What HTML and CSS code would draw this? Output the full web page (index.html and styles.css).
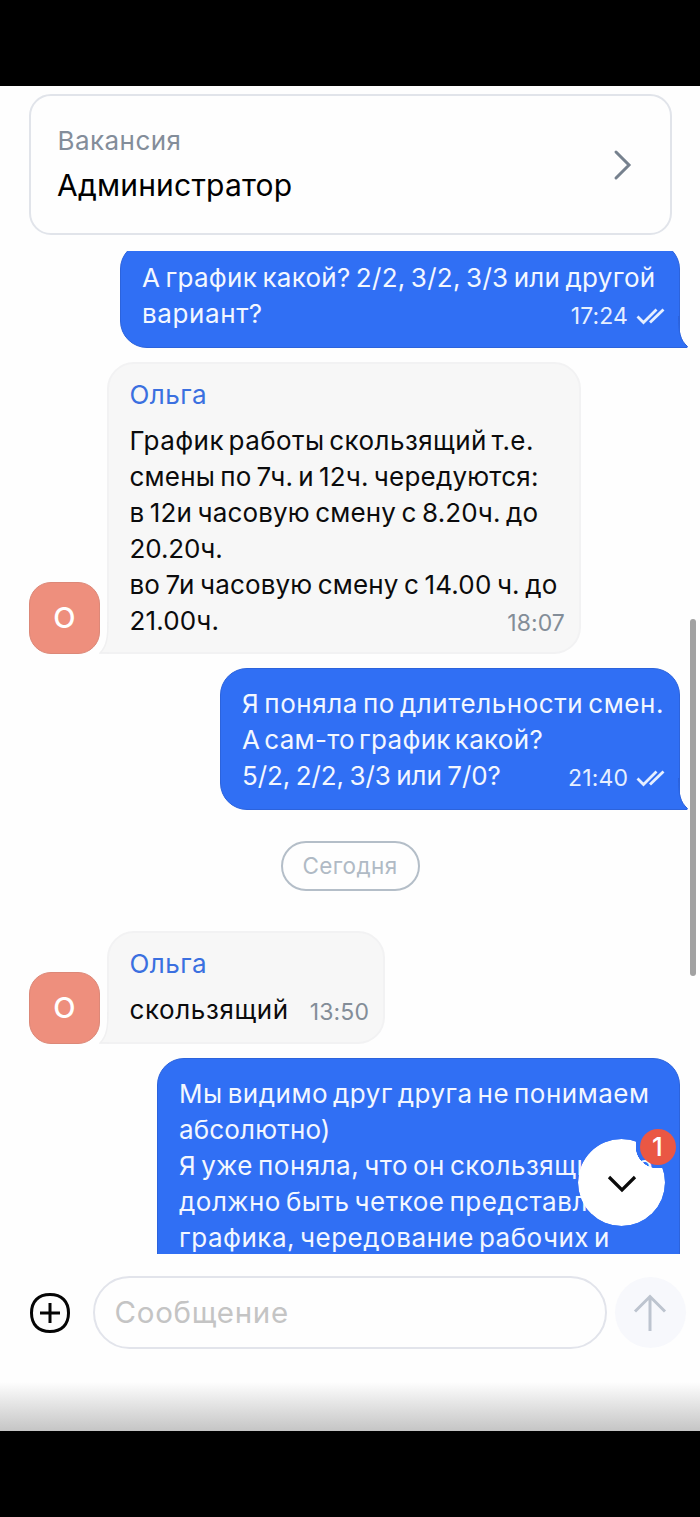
FILE: index.html
```html
<!DOCTYPE html>
<html lang="ru">
<head>
<meta charset="utf-8">
<title>Чат</title>
<link rel="stylesheet" href="styles.css">
</head>
<body>
<div class="bar bar-top"></div>
<main class="screen">
  <header class="vacancy">
    <div class="vacancy-text">
      <div class="vacancy-label">Вакансия</div>
      <div class="vacancy-title">Администратор</div>
    </div>
    <svg class="chevron" viewBox="0 0 20 32"><path d="M3 3l13 13L3 29"/></svg>
  </header>

  <section class="chat">
    <article class="row row-out row-first">
      <div class="bubble out tail">
        <div class="line normal"><span>А график какой? 2/2, 3/2, 3/3 или другой</span></div>
        <div class="line wider"><span>вариант?</span><span class="meta"><span>17:24</span><svg class="checks" viewBox="0 0 30 18"><path d="M1.500 9.500l6 6L20.500 2.500M14 15.500L27.500 2.500"/></svg></span></div>
        <svg class="tail-out" viewBox="-1 0 10 32"><path class="tail-fill" d="M-1 0H0C0 16 1 24 8.500 30.500Q8.500 32 7 32H-1Z"/><path class="tail-edge" d="M-.5 0C-.5 16 1 24 8.500 30.500Q8.500 31.500 7 31.500H-1"/></svg>
      </div>
    </article>

    <article class="row row-in">
      <div class="avatar">О</div>
      <div class="bubble in wide">
        <div class="line name"><span>Ольга</span></div>
        <div class="line wide-text first"><span>График работы скользящий т.е.</span></div>
        <div class="line normal mixed"><span>смены по 7ч. и 12ч. чередуются:</span></div>
        <div class="line tight"><span>в 12и часовую смену с 8.20ч. до</span></div>
        <div class="line tight digits"><span>20.20ч.</span></div>
        <div class="line tight"><span>во 7и часовую смену с 14.00 ч. до</span></div>
        <div class="line tight"><span>21.00ч.</span><span class="meta"><span>18:07</span></span></div>
        <svg class="tail-in" viewBox="0 0 10 32"><path class="tail-fill" d="M9 0C9 16 8 24 1 31.500H10V0Z"/><path class="tail-edge" d="M9 0C9 16 7.500 25 1 31H10"/></svg>
      </div>
    </article>

    <article class="row row-out">
      <div class="bubble out tail mid">
        <div class="line wide-text"><span>Я поняла по длительности смен.</span></div>
        <div class="line normal compact"><span>А сам-то график какой?</span></div>
        <div class="line digits"><span>5/2, 2/2, 3/3 или 7/0?</span><span class="meta"><span>21:40</span><svg class="checks" viewBox="0 0 30 18"><path d="M1.500 9.500l6 6L20.500 2.500M14 15.500L27.500 2.500"/></svg></span></div>
        <svg class="tail-out" viewBox="-1 0 10 32"><path class="tail-fill" d="M-1 0H0C0 16 1 24 8.500 30.500Q8.500 32 7 32H-1Z"/><path class="tail-edge" d="M-.5 0C-.5 16 1 24 8.500 30.500Q8.500 31.500 7 31.500H-1"/></svg>
      </div>
    </article>

    <div class="day">Сегодня</div>

    <article class="row row-in">
      <div class="avatar">О</div>
      <div class="bubble in short">
        <div class="line name"><span>Ольга</span></div>
        <div class="line wider"><span>скользящий</span><span class="meta"><span>13:50</span></span></div>
        <svg class="tail-in" viewBox="0 0 10 32"><path class="tail-fill" d="M9 0C9 16 8 24 1 31.500H10V0Z"/><path class="tail-edge" d="M9 0C9 16 7.500 25 1 31H10"/></svg>
      </div>
    </article>

    <article class="row row-out">
      <div class="bubble out last">
        <div class="line roomy"><span>Мы видимо друг друга не понимаем</span></div>
        <div class="line tight"><span>абсолютно)</span></div>
        <div class="line roomy"><span>Я уже поняла, что он скользящий, но</span></div>
        <div class="line roomy"><span>должно быть четкое представление</span></div>
        <div class="line roomy"><span>графика, чередование рабочих и</span></div>
      </div>
    </article>

    <button class="to-bottom" aria-label="Вниз">
      <svg class="down" viewBox="0 0 30 18"><path d="M2 2l13 13L28 2"/></svg>
    </button>
    <span class="badge">1</span>
  </section>

  <footer class="composer">
    <svg class="plus" viewBox="0 0 42 42"><path d="M21 2.500C32.600 2.500 39.500 9.400 39.500 21S32.600 39.500 21 39.500 2.500 32.600 2.500 21 9.400 2.500 21 2.500Z"/><path d="M21 11v20M11 21h20"/></svg>
    <div class="field">Сообщение</div>
    <div class="send"><svg viewBox="0 0 34 38"><path d="M2 17.500L17 2.500l15 15M17 3v34"/></svg></div>
  </footer>
  <div class="shade"></div>
  <div class="scrollbar"></div>
</main>
<div class="bar bar-bottom"></div>
</body>
</html>
```
FILE: styles.css
```css
* { box-sizing: border-box; }
body {
  margin: 0;
  width: 700px;
  height: 1517px;
  overflow: hidden;
  background: #fefefe;
  color: #0b0b0c;
  font: 400 26px/36px Inter, "Noto Sans", sans-serif;
  display: flex;
  flex-direction: column;
}
svg { display: block; fill: none; }
.bar { background: #000; flex: none; }
.bar-top { height: 85.5px; }
.bar-bottom { height: 86.5px; }
.screen {
  position: relative;
  height: 1345px;
  flex: none;
  display: flex;
  flex-direction: column;
}
.vacancy {
  margin: 8px 28px 0 29px;
  height: 141px;
  flex: none;
  border: 2px solid #e1e4ea;
  border-radius: 22px;
  padding: 27px 37px 0 26.5px;
  display: flex;
  justify-content: space-between;
}
.vacancy-label { font-size: 26px; line-height: 36px; letter-spacing: 0.45px; color: #838d9a; }
.vacancy-title { font-size: 30px; line-height: 40px; letter-spacing: 0.2px; margin: 6px 0 0 -0.5px; color: #000; }
.chevron { width: 20px; height: 32px; margin-top: 26px; stroke: #76818e; stroke-width: 3; stroke-linecap: round; }

.chat {
  position: relative;
  margin-top: 16.5px;
  height: 1003px;
  flex: none;
  overflow: hidden;
  display: flex;
  flex-direction: column;
}
.row { display: flex; flex: none; margin-bottom: 14px; align-items: flex-end; }
.row-first { margin-top: -9px; }
.row-out { justify-content: flex-end; padding-right: 20px; }
.row-in { padding-left: 28.5px; gap: 7px; }
.bubble { position: relative; border-radius: 27px; }
.out {
  width: 560px;
  padding: 17px 13px 15px 21px;
  background: #306ff4;
  border: 1px solid #2c63dc;
  color: #f3f7ff;
}
.tail { border-bottom-right-radius: 0; }
.out.mid { width: 460px; }
.out.last { width: 523px; padding-bottom: 60px; }
.in {
  padding: 12.5px 14px 13px 20.5px;
  background: #f7f7f7;
  border: 2px solid #f2f2f3;
  border-bottom-left-radius: 0;
}
.in.wide { width: 474px; }
.in.short { width: 278px; padding-top: 13.5px; padding-bottom: 13.5px; }

/* text lines; the modifiers balance letter and word spacing */
.line { height: 36px; display: flex; justify-content: space-between; white-space: pre; }
.tight { letter-spacing: 0.15px; word-spacing: -2px; }
.normal { letter-spacing: 0.3px; word-spacing: -2.4px; }
.mixed { letter-spacing: 0.2px; }
.compact { word-spacing: -3.6px; }
.roomy { letter-spacing: 0.5px; word-spacing: -2.8px; }
.wide-text { letter-spacing: 0.55px; word-spacing: -2.8px; }
.first { letter-spacing: 0.45px; word-spacing: -3.2px; }
.wider { letter-spacing: 0.6px; }
.digits { letter-spacing: -0.1px; word-spacing: -1.6px; }
.name { color: #3b70e0; margin-bottom: 10px; letter-spacing: 0.45px; }
.meta { display: flex; font-size: 23px; letter-spacing: 0.1px; word-spacing: 0; padding-top: 2px; color: #838d98; }
.out .meta { color: #e6efff; gap: 8px; }
.checks { width: 30px; height: 18px; margin-top: 9px; stroke: #e6efff; stroke-width: 2.8; }

.tail-out { position: absolute; right: -9px; bottom: -1px; width: 10px; height: 32px; }
.tail-in { position: absolute; left: -10px; bottom: -2px; width: 10px; height: 32px; }
.tail-out .tail-fill { fill: #306ff4; }
.tail-out .tail-edge { stroke: #2c63dc; }
.tail-in .tail-fill { fill: #f7f7f7; }
.tail-in .tail-edge { stroke: #f0f0f1; stroke-width: 1.5; }
.avatar {
  width: 71.5px;
  height: 71.5px;
  border: 1px solid #dc8878;
  border-radius: 22px;
  background: #ee8f7d;
  color: #fff;
  font-size: 29px;
  font-weight: 500;
  line-height: 69px;
  text-align: center;
}
.day {
  align-self: center;
  width: 139px;
  height: 50px;
  flex: none;
  margin: 17px 0 40px;
  border: 2px solid #b4bec8;
  border-radius: 25px;
  color: #b0bac5;
  font-size: 22.5px;
  letter-spacing: 0.4px;
  line-height: 46px;
  text-align: center;
}
.to-bottom {
  position: absolute;
  left: 578px;
  top: 888px;
  width: 87px;
  height: 87px;
  padding: 2px 0 0;
  border: 0;
  border-radius: 50%;
  background: #fff;
  display: grid;
  place-items: center;
  -webkit-mask: radial-gradient(circle at 79.5px 7.5px, transparent 21.5px, #000 22px);
  mask: radial-gradient(circle at 79.5px 7.5px, transparent 21.5px, #000 22px);
}
.down { width: 30px; height: 18px; stroke: #0a0a0a; stroke-width: 3.2; }
.badge {
  position: absolute;
  left: 639.5px;
  top: 877.5px;
  width: 36px;
  height: 36px;
  border-radius: 50%;
  background: #ea5744;
  color: #fff;
  font-size: 26px;
  font-weight: 500;
  line-height: 36px;
  text-align: center;
}
.composer {
  margin-top: 22px;
  padding: 0 13.5px 0 29px;
  height: 73px;
  flex: none;
  display: flex;
  align-items: center;
}
.plus { width: 42px; height: 42px; stroke: #050505; stroke-width: 3; }
.field {
  width: 514px;
  height: 73px;
  margin-left: 22px;
  padding: 0 19.5px;
  border: 2px solid #e2e4eb;
  border-radius: 36.5px;
  color: #c4c4c4;
  font-size: 29.5px;
  letter-spacing: 0.7px;
  line-height: 68px;
}
.send {
  margin-left: 7.5px;
  width: 71.5px;
  height: 71.5px;
  border-radius: 50%;
  background: #f7f8fc;
  display: grid;
  place-items: center;
}
.send svg { width: 34px; height: 38px; stroke: #bdc4cf; stroke-width: 3; }
.shade { margin-top: auto; height: 49px; flex: none; background: linear-gradient(#fefefe, #c5c5c5); }
.scrollbar {
  position: absolute;
  left: 690px;
  top: 533.5px;
  width: 5.5px;
  height: 357px;
  border-radius: 3px;
  background: #a2a2a2;
}
```
